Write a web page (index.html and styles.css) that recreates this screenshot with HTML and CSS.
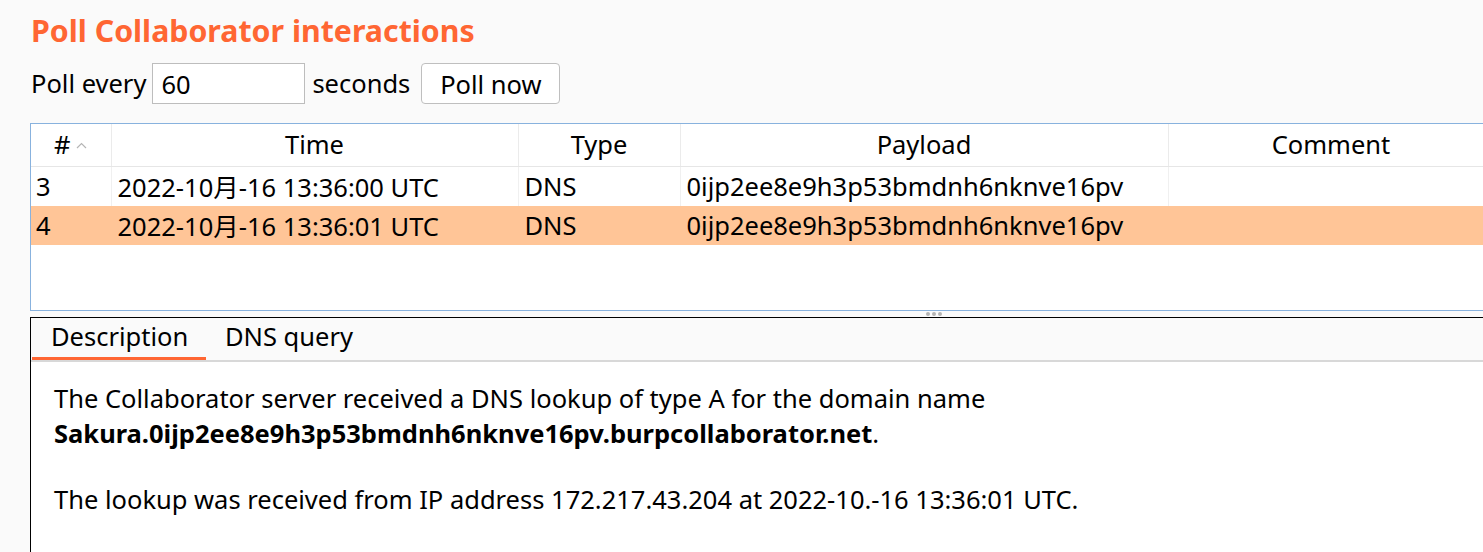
FILE: index.html
```html
<!DOCTYPE html>
<html lang="en">
<head>
<meta charset="utf-8">
<title>Poll Collaborator interactions</title>
<link rel="stylesheet" href="styles.css">
</head>
<body>
<div class="top">
  <h1 class="title">Poll Collaborator interactions</h1>
  <div class="controls">
    <span class="label">Poll every</span>
    <input class="interval" type="text" value="60">
    <span class="label">seconds</span>
    <button class="poll">Poll now</button>
  </div>
</div>
<div class="table-panel">
  <table class="grid">
    <colgroup>
      <col class="c-num"><col class="c-time"><col class="c-type"><col class="c-payload"><col class="c-comment">
    </colgroup>
    <thead>
      <tr>
        <th><span class="hash">#</span><svg class="sort" width="11" height="7" viewBox="0 0 11 7"><polyline points="1,6 5.5,1.5 10,6" fill="none" stroke="#b5b5b5" stroke-width="1.2"/></svg></th>
        <th>Time</th>
        <th>Type</th>
        <th>Payload</th>
        <th>Comment</th>
      </tr>
    </thead>
    <tbody>
      <tr>
        <td>3</td>
        <td>2022-10月-16 13:36:00 UTC</td>
        <td>DNS</td>
        <td>0ijp2ee8e9h3p53bmdnh6nknve16pv</td>
        <td></td>
      </tr>
      <tr class="selected">
        <td>4</td>
        <td>2022-10月-16 13:36:01 UTC</td>
        <td>DNS</td>
        <td>0ijp2ee8e9h3p53bmdnh6nknve16pv</td>
        <td></td>
      </tr>
    </tbody>
  </table>
</div>
<div class="splitter"><span class="dot"></span><span class="dot"></span><span class="dot"></span></div>
<div class="detail">
  <div class="tabs">
    <div class="tab active">Description</div>
    <div class="tab">DNS query</div>
  </div>
  <div class="content">
    <p>The Collaborator server received a DNS lookup of type A for the domain name<br><strong>Sakura.0ijp2ee8e9h3p53bmdnh6nknve16pv.burpcollaborator.net</strong>.</p>
    <p>The lookup was received from IP address 172.217.43.204 at 2022-10.-16 13:36:01 UTC.</p>
  </div>
</div>
</body>
</html>
```

FILE: styles.css
```css
html, body {
  margin: 0;
  padding: 0;
  background: #fafafa;
  overflow: hidden;
  height: 552px;
}
body {
  display: flex;
  flex-direction: column;
  font-family: "Noto Sans", "Noto Sans CJK SC", sans-serif;
  font-size: 25.5px;
  color: #000;
}
.top {
  padding: 11px 0 0 31px;
}
.title {
  margin: 0;
  font-size: 30.3px;
  line-height: 40px;
  font-weight: bold;
  color: #ff6633;
}
.controls {
  display: flex;
  align-items: center;
  height: 41px;
  margin-top: 12px;
}
.label {
  line-height: 41px;
}
.interval {
  box-sizing: border-box;
  width: 153px;
  height: 41px;
  margin: 0 7px 0 6px;
  padding: 0 8px;
  border: 1px solid #bdbdbd;
  background: #fff;
  font: inherit;
  color: #000;
  outline: none;
}
.poll {
  box-sizing: border-box;
  height: 41px;
  width: 139px;
  margin-left: 11px;
  padding: 0;
  border: 1px solid #bfbfbf;
  border-radius: 4px;
  background: #fff;
  font: inherit;
  color: #000;
}
.table-panel {
  box-sizing: border-box;
  flex: none;
  margin: 19px 0 0 30px;
  height: 188px;
  border-top: 1px solid #88b2de;
  border-left: 1px solid #88b2de;
  border-bottom: 1px solid #88b2de;
  background: #fff;
  overflow: hidden;
}
.grid {
  table-layout: fixed;
  width: 1463px;
  border-collapse: collapse;
}
.c-num { width: 80px; }
.c-time { width: 407px; }
.c-type { width: 162px; }
.c-payload { width: 488px; }
.c-comment { width: 326px; }
.grid th {
  height: 40px;
  padding: 0 0 2px 0;
  font-weight: normal;
  text-align: center;
  border-right: 1px solid #ebebeb;
  border-bottom: 1px solid #e6e6e6;
  white-space: nowrap;
}
.sort {
  margin-left: 6px;
  vertical-align: 5px;
}
.grid td {
  height: 34px;
  padding: 0 0 2px 6px;
  border-right: 1px solid #f0f0f0;
  white-space: nowrap;
  overflow: hidden;
}
.grid td:first-child {
  padding-left: 5px;
}
.grid tr.selected td {
  background: #ffc597;
  border-right-color: #ffc597;
}
.splitter {
  flex: none;
  box-sizing: border-box;
  height: 6px;
  margin-left: 30px;
  padding-left: 896px;
  display: flex;
  align-items: center;
  gap: 2px;
}
.dot {
  width: 4px;
  height: 4px;
  border-radius: 50%;
  background: #b4b4b4;
}
.detail {
  flex: 1;
  margin-left: 30px;
  border-top: 1px solid #000;
  border-left: 1px solid #000;
  background: #fff;
}
.tabs {
  display: flex;
  height: 42px;
  background: #fafafa;
  border-bottom: 2px solid #d8d8d8;
  padding-left: 1px;
}
.tab {
  box-sizing: border-box;
  height: 42px;
  line-height: 36px;
  padding: 0 19px;
  white-space: nowrap;
}
.tab.active {
  width: 174px;
  border-bottom: 3px solid #ff6633;
}
.content {
  padding: 19px 0 0 23px;
  line-height: 35px;
}
.content p {
  margin: 0 0 31px 0;
}
.content strong {
  font-weight: bold;
}
```
